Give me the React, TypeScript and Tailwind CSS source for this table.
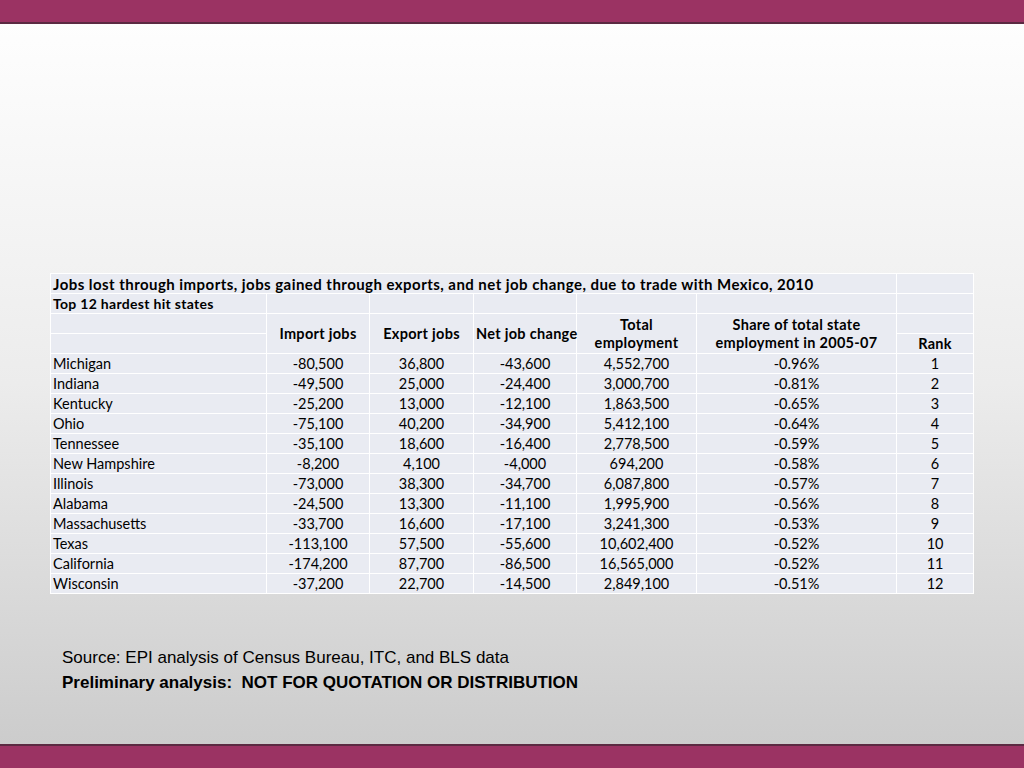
import React from 'react';

const rows = [
  ['Michigan', '-80,500', '36,800', '-43,600', '4,552,700', '-0.96%', '1'],
  ['Indiana', '-49,500', '25,000', '-24,400', '3,000,700', '-0.81%', '2'],
  ['Kentucky', '-25,200', '13,000', '-12,100', '1,863,500', '-0.65%', '3'],
  ['Ohio', '-75,100', '40,200', '-34,900', '5,412,100', '-0.64%', '4'],
  ['Tennessee', '-35,100', '18,600', '-16,400', '2,778,500', '-0.59%', '5'],
  ['New Hampshire', '-8,200', '4,100', '-4,000', '694,200', '-0.58%', '6'],
  ['Illinois', '-73,000', '38,300', '-34,700', '6,087,800', '-0.57%', '7'],
  ['Alabama', '-24,500', '13,300', '-11,100', '1,995,900', '-0.56%', '8'],
  ['Massachusetts', '-33,700', '16,600', '-17,100', '3,241,300', '-0.53%', '9'],
  ['Texas', '-113,100', '57,500', '-55,600', '10,602,400', '-0.52%', '10'],
  ['California', '-174,200', '87,700', '-86,500', '16,565,000', '-0.52%', '11'],
  ['Wisconsin', '-37,200', '22,700', '-14,500', '2,849,100', '-0.51%', '12'],
];

const cell = 'border border-white bg-[#e9ebf2] px-[2px] h-[20px] leading-[18px] align-middle';
const head = 'font-bold text-center tracking-[0.3px]';

export default function App() {
  return (
    <div className="h-screen w-full flex flex-col bg-gradient-to-b from-[#ffffff] via-[#ececec] to-[#cacaca] font-['Lato',_'Liberation_Sans',_sans-serif] text-black">
      {/* top band */}
      <div className="h-[22px] bg-[#9b3363] shrink-0" />
      <div className="h-[2px] bg-[#5b2a42] shrink-0" />

      <div className="flex-1 pt-[249px] pl-[50px]">
        <table className="border-collapse table-fixed w-[923px] text-[14.5px]">
          <colgroup>
            <col className="w-[216px]" />
            <col className="w-[103px]" />
            <col className="w-[104px]" />
            <col className="w-[103px]" />
            <col className="w-[120px]" />
            <col className="w-[200px]" />
            <col className="w-[77px]" />
          </colgroup>
          <tbody>
            <tr>
              <td colSpan={6} className={`${cell} font-bold whitespace-nowrap text-[15px] tracking-[0.45px]`}>
                Jobs lost through imports, jobs gained through exports, and net job change, due to trade with Mexico, 2010
              </td>
              <td className={cell} />
            </tr>
            <tr>
              <td className={`${cell} font-bold text-[14px] tracking-[0.3px]`}>Top 12 hardest hit states</td>
              <td className={cell} />
              <td className={cell} />
              <td className={cell} />
              <td className={cell} />
              <td className={cell} />
              <td className={cell} />
            </tr>
            <tr>
              <td className={cell} />
              <td rowSpan={2} className={`${cell} ${head}`}>Import jobs</td>
              <td rowSpan={2} className={`${cell} ${head}`}>Export jobs</td>
              <td rowSpan={2} className={`${cell} ${head} whitespace-nowrap`}>Net job change</td>
              <td rowSpan={2} className={`${cell} ${head}`}>
                Total
                <br />
                employment
              </td>
              <td rowSpan={2} className={`${cell} ${head}`}>
                Share of total state
                <br />
                employment in 2005-07
              </td>
              <td className={cell} />
            </tr>
            <tr>
              <td className={cell} />
              <td className={`${cell} ${head}`}>Rank</td>
            </tr>
            {rows.map((r) => (
              <tr key={r[0]}>
                <td className={cell}>{r[0]}</td>
                {r.slice(1).map((v, i) => (
                  <td key={i} className={`${cell} text-center`}>
                    {v}
                  </td>
                ))}
              </tr>
            ))}
          </tbody>
        </table>

        <div className="mt-[51px] ml-[12px] font-['Liberation_Sans',_Arial,_sans-serif] text-[17px] leading-[25px]">
          <p>Source: EPI analysis of Census Bureau, ITC, and BLS data</p>
          <p className="font-bold">Preliminary analysis:&nbsp; NOT FOR QUOTATION OR DISTRIBUTION</p>
        </div>
      </div>

      {/* bottom band */}
      <div className="h-[2px] bg-[#5b2a42] shrink-0" />
      <div className="h-[22px] bg-[#9b3363] shrink-0" />
    </div>
  );
}
